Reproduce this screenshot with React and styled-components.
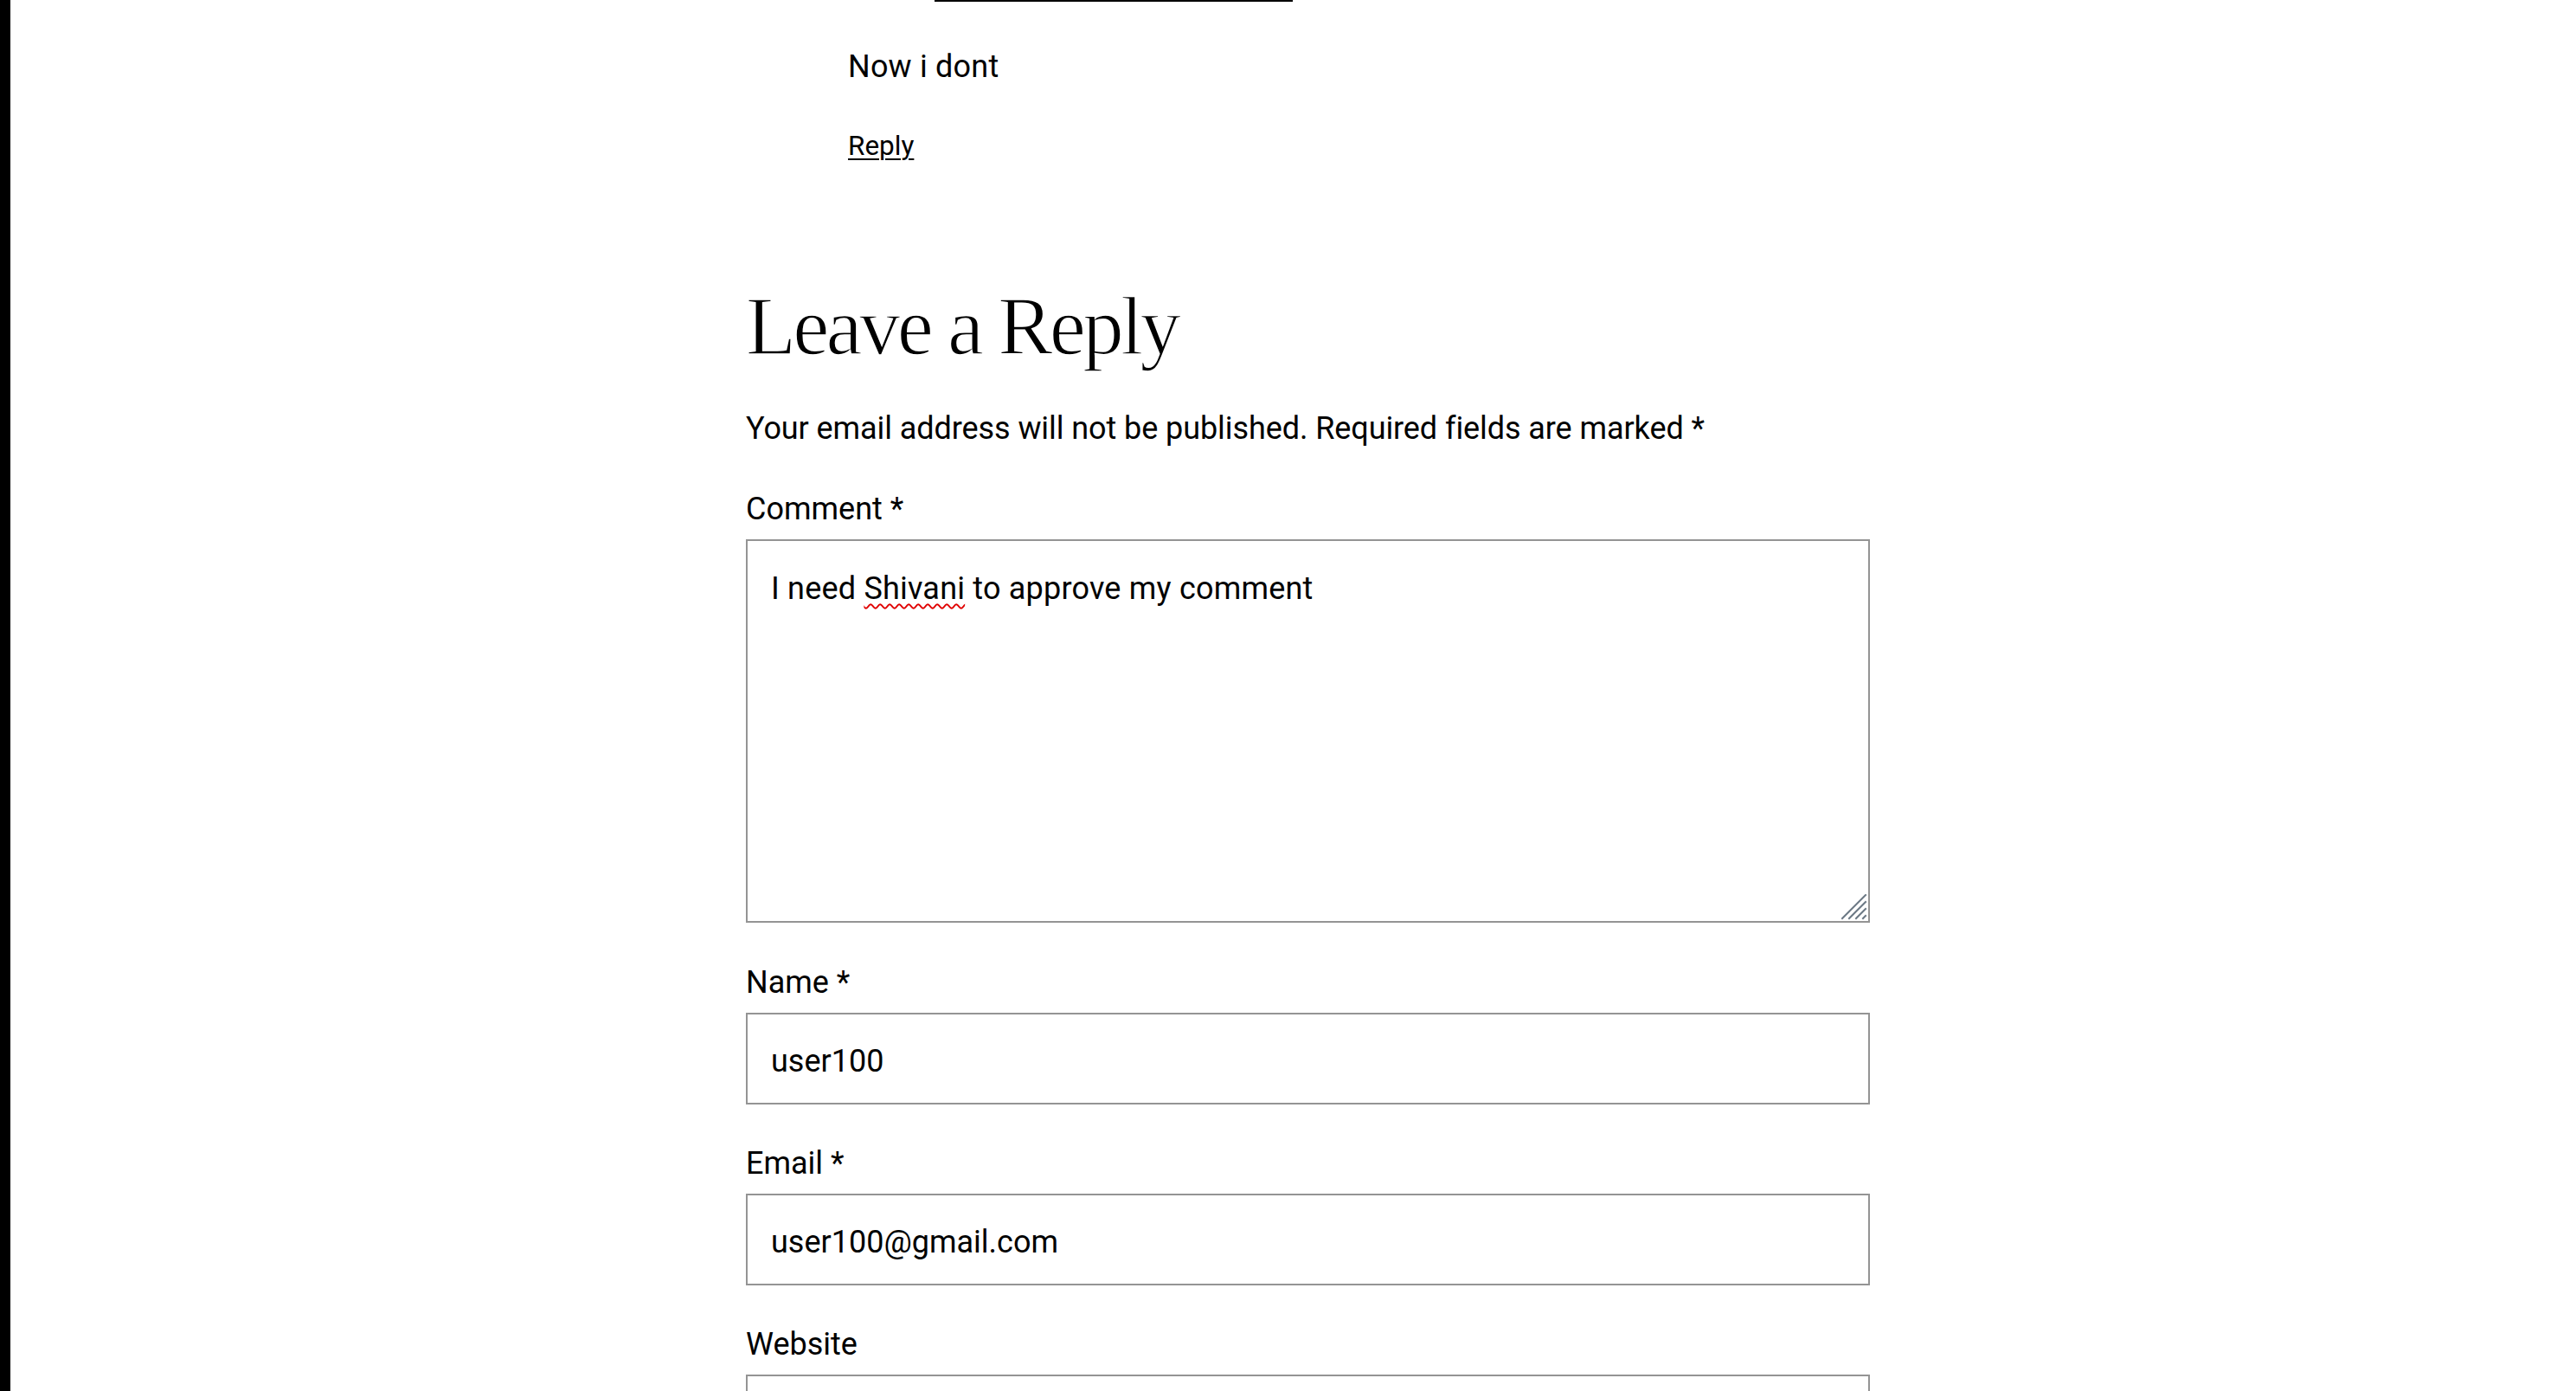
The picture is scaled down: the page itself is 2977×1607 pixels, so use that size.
import styled, { createGlobalStyle } from 'styled-components';

const GlobalStyle = createGlobalStyle`
  html, body {
    margin: 0;
    padding: 0;
    background: #fff;
  }
  body {
    font-family: Roboto, "Noto Sans", sans-serif;
    color: #000;
  }
`;

const Page = styled.div`
  display: flex;
  height: 100vh;
  overflow: hidden;
`;

const Edge = styled.div`
  width: 12px;
  flex-shrink: 0;
  background: #000;
`;

const Main = styled.main`
  flex: 1;
  padding-left: 850px;
`;

const Column = styled.div`
  width: 1299px;
`;

const MetaRule = styled.div`
  margin-left: 218px;
  width: 414px;
  height: 2px;
  background: #000;
`;

const CommentBody = styled.div`
  padding-left: 118px;
`;

const CommentText = styled.p`
  margin: 46px 0 0;
  font-size: 36px;
  line-height: 58px;
  letter-spacing: 0.2px;
`;

const ReplyLink = styled.a`
  display: block;
  width: fit-content;
  margin-top: 38px;
  font-size: 31.5px;
  line-height: 50px;
  color: #000;
  text-decoration: underline;
  text-decoration-thickness: 2px;
  text-underline-offset: 4px;
  cursor: pointer;
`;

/* thin white stroke eats into the glyphs so the serif reads as a light weight */
const Title = styled.h2`
  margin: 128px 0 0;
  font-family: "Liberation Serif", "Times New Roman", serif;
  font-weight: 400;
  font-size: 95px;
  line-height: 110px;
  letter-spacing: -3.8px;
  -webkit-text-stroke: 1.6px #fff;
`;

const Notes = styled.p`
  margin: 34px 0 0;
  font-size: 36px;
  line-height: 58px;
  letter-spacing: -0.08px;
`;

const Form = styled.form`
  margin-top: 35px;
`;

const Field = styled.div`
  margin-bottom: ${({ $gap }) => $gap || 39}px;
`;

const Label = styled.label`
  display: block;
  font-size: 36px;
  line-height: 58px;
  margin-bottom: 6px;
`;

const TextBox = styled.div`
  position: relative;
  box-sizing: border-box;
  height: 443px;
  border: 2px solid #949494;
  padding: 26px 27px;
  font-size: 36px;
  line-height: 58px;
  letter-spacing: 0.2px;
  background: #fff;
`;

const Misspelled = styled.span`
  text-decoration: underline wavy #e00000;
  text-decoration-thickness: 1.5px;
  text-underline-offset: 5px;
  text-decoration-skip-ink: none;
`;

const Grip = styled.svg`
  position: absolute;
  right: 1px;
  bottom: 1px;
  width: 30px;
  height: 30px;
`;

const Input = styled.input`
  display: block;
  box-sizing: border-box;
  width: 100%;
  height: 106px;
  margin: 0;
  border: 2px solid #949494;
  border-radius: 0;
  padding: 5px 27px 0;
  font-family: inherit;
  font-size: 36px;
  color: #000;
  background: #fff;
  outline: none;
`;

export default function App() {
  return (
    <>
      <GlobalStyle />
      <Page>
        <Edge />
        <Main>
          <Column>
            <MetaRule />
            <CommentBody>
              <CommentText>Now i dont</CommentText>
              <ReplyLink>Reply</ReplyLink>
            </CommentBody>

            <Title>Leave a Reply</Title>
            <Notes>Your email address will not be published. Required fields are marked *</Notes>

            <Form onSubmit={(e) => e.preventDefault()}>
              <Field $gap={40}>
                <Label>Comment *</Label>
                <TextBox>
                  I need <Misspelled>Shivani</Misspelled> to approve my comment
                  <Grip viewBox="0 0 30 30">
                    <g stroke="#6b7884" strokeWidth="2" strokeLinecap="square">
                      <line x1="1" y1="28" x2="28" y2="1" />
                      <line x1="9" y1="28" x2="28" y2="9" />
                      <line x1="17" y1="28" x2="28" y2="17" />
                      <line x1="25" y1="28" x2="28" y2="25" />
                    </g>
                  </Grip>
                </TextBox>
              </Field>
              <Field>
                <Label>Name *</Label>
                <Input type="text" defaultValue="user100" />
              </Field>
              <Field>
                <Label>Email *</Label>
                <Input type="email" defaultValue="user100@gmail.com" />
              </Field>
              <Field>
                <Label>Website</Label>
                <Input type="url" defaultValue="" />
              </Field>
            </Form>
          </Column>
        </Main>
      </Page>
    </>
  );
}
